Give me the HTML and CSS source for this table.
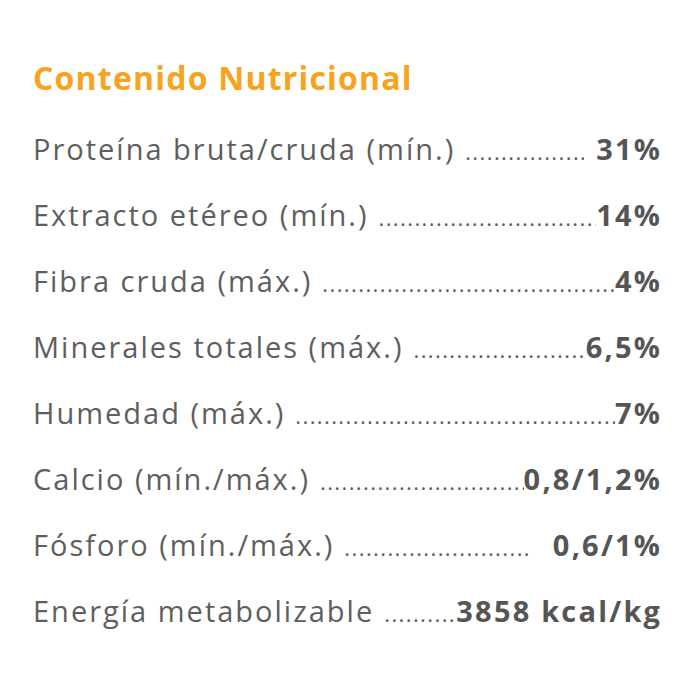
FILE: index.html
```html
<!DOCTYPE html>
<html lang="es">
<head>
<meta charset="utf-8">
<link rel="stylesheet" href="styles.css">
</head>
<body>
<section class="panel">
  <h2 class="title">Contenido Nutricional</h2>
  <ul class="list">
    <li class="row"><span class="label">Proteína bruta/cruda (mín.)</span><span class="dots"></span><span class="value gap">31%</span></li>
    <li class="row"><span class="label">Extracto etéreo (mín.)</span><span class="dots"></span><span class="value">14%</span></li>
    <li class="row"><span class="label">Fibra cruda (máx.)</span><span class="dots"></span><span class="value">4%</span></li>
    <li class="row"><span class="label">Minerales totales (máx.)</span><span class="dots"></span><span class="value">6,5%</span></li>
    <li class="row"><span class="label">Humedad (máx.)</span><span class="dots"></span><span class="value">7%</span></li>
    <li class="row"><span class="label">Calcio (mín./máx.)</span><span class="dots"></span><span class="value">0,8/1,2%</span></li>
    <li class="row"><span class="label">Fósforo (mín./máx.)</span><span class="dots"></span><span class="value gap-lg">0,6/1%</span></li>
    <li class="row"><span class="label">Energía metabolizable</span><span class="dots"></span><span class="value">3858 kcal/kg</span></li>
  </ul>
</section>
</body>
</html>
```
FILE: styles.css
```css
html, body {
  margin: 0;
  padding: 0;
  background: #ffffff;
}
.panel {
  width: 700px;
  height: 700px;
  box-sizing: border-box;
  padding: 58px 40px 0 33px;
  font-family: "Open Sans", "DejaVu Sans", sans-serif;
}
.title {
  margin: 0 0 29px 0;
  font-size: 32px;
  line-height: 40px;
  font-weight: 700;
  letter-spacing: 1.2px;
  color: #f6a31e;
}
.list {
  list-style: none;
  margin: 0;
  padding: 0;
}
.row {
  display: flex;
  align-items: baseline;
  height: 66px;
  line-height: 44px;
  font-size: 29px;
  letter-spacing: 2px;
  color: #5e5e5e;
  white-space: nowrap;
}
.label {
  flex: none;
  font-weight: 400;
  padding-right: 10px;
}
.dots {
  flex: 1 1 auto;
  min-width: 0;
  overflow: hidden;
  font-size: 22px;
  letter-spacing: 1.4px;
}
.dots::before {
  content: "........................................................................................................................";
}
.value {
  flex: none;
  font-weight: 700;
  color: #555555;
  letter-spacing: 2.2px;
  margin-right: -2.2px;
}
.gap { margin-left: 12px; }
.gap-lg { margin-left: 24px; }
```
